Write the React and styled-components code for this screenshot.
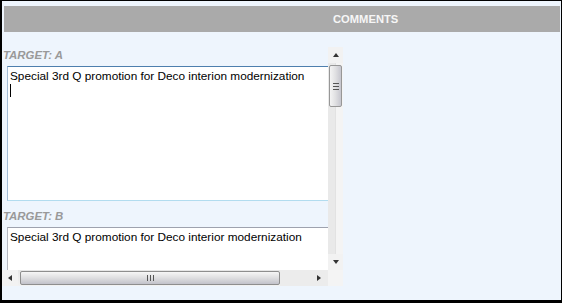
import styled, { createGlobalStyle } from "styled-components";

const GlobalStyle = createGlobalStyle`
  body {
    margin: 0;
    font-family: "Liberation Sans", Arial, sans-serif;
  }
`;

const comments = [
  {
    target: "A",
    text: "Special 3rd Q promotion for Deco interion modernization",
    height: 135,
    focused: true,
  },
  {
    target: "B",
    text: "Special 3rd Q promotion for Deco interior modernization",
    height: 135,
    focused: false,
  },
];

const App = () => {
  return (
    <>
      <GlobalStyle />
      <Frame>
        <HeaderBar>COMMENTS</HeaderBar>
        <Panel>
          <Viewport>
            {comments.map((c) => (
              <Field key={c.target}>
                <Label>TARGET: {c.target}</Label>
                <TextBox $height={c.height} $focused={c.focused}>
                  {c.text}
                  {c.focused && <Caret />}
                </TextBox>
              </Field>
            ))}
          </Viewport>
          <VScroll>
            <VButton>
              <ArrowUp />
            </VButton>
            <VThumb>
              <HGrip />
            </VThumb>
            <Spacer />
            <VButton>
              <ArrowDown />
            </VButton>
          </VScroll>
          <HScroll>
            <HButton>
              <ArrowLeft />
            </HButton>
            <HThumb>
              <VGrip />
            </HThumb>
            <HRest>
              <ArrowRight />
            </HRest>
          </HScroll>
          <Corner />
        </Panel>
      </Frame>
    </>
  );
};

export default App;

const Frame = styled.div`
  box-sizing: border-box;
  width: 562px;
  height: 303px;
  border-style: solid;
  border-color: #000;
  border-width: 1px 1px 3px 2px;
  background: #eef5fd;
  padding-top: 5px;
`;

const HeaderBar = styled.div`
  height: 26px;
  margin: 0 1px 0 2px;
  background: #aaaaaa;
  display: flex;
  align-items: center;
  padding-left: 329px;
  color: #f6f6f6;
  font-weight: bold;
  font-size: 11.2px;
`;

const Panel = styled.div`
  margin-top: 15px;
  display: grid;
  grid-template-columns: 326px 15px;
  grid-template-rows: 223px 16px;
  width: 341px;
`;

const Viewport = styled.div`
  overflow: hidden;
  padding-left: 1px;
`;

const Field = styled.div`
  & + & {
    margin-top: 7px;
  }
`;

const Label = styled.div`
  height: 19px;
  box-sizing: border-box;
  padding-top: 2px;
  line-height: 13px;
  font-size: 11.4px;
  font-weight: bold;
  font-style: italic;
  color: #999999;
`;

const TextBox = styled.div`
  box-sizing: border-box;
  width: 380px;
  height: ${(p) => p.$height}px;
  margin-left: 4px;
  padding: 2px 2px 1px;
  background: #fff;
  border: 1px solid;
  border-color: ${(p) =>
    p.$focused
      ? "#4e7fae #a3bcd6 #b2dcef #a3bcd6"
      : "#9ea2ae #b4b8c2 #b4b8c2 #b4b8c2"};
  font-size: 11.8px;
  line-height: 14px;
  color: #000;
  white-space: nowrap;
`;

const Caret = styled.div`
  width: 1px;
  height: 13px;
  margin-top: 1px;
  background: #000;
`;

const VScroll = styled.div`
  display: flex;
  flex-direction: column;
  background: linear-gradient(to right, #e9e9e9 0 7px, #e2e2e2 7px 8px, #f4f4f4 8px);
`;

const VButton = styled.div`
  height: 16px;
  display: flex;
  align-items: center;
  justify-content: center;
  background: #f2f2f2;
`;

const Spacer = styled.div`
  flex: 1;
`;

const VThumb = styled.div`
  box-sizing: border-box;
  height: 42px;
  margin: 2px 1px 0;
  border: 1px solid #979797;
  border-radius: 2px;
  background: linear-gradient(to right, #f4f4f4, #e0e0e2 50%, #c6c6ce);
  display: flex;
  align-items: center;
  justify-content: center;
`;

const HGrip = styled.div`
  width: 6px;
  height: 7px;
  background: repeating-linear-gradient(to bottom, #555 0 1px, transparent 1px 3px);
`;

const HScroll = styled.div`
  display: flex;
  background: linear-gradient(to bottom, #e6e6e6, #f2f2f2);
`;

const HButton = styled.div`
  width: 16px;
  display: flex;
  align-items: center;
  justify-content: center;
  background: #f2f2f2;
  margin-right: 2px;
`;

const HThumb = styled.div`
  box-sizing: border-box;
  width: 260px;
  height: 14px;
  margin-top: 1px;
  border: 1px solid #8e8e8e;
  border-radius: 2px;
  background: linear-gradient(to bottom, #f6f6f6, #dedee0 50%, #c2c2ca);
  display: flex;
  align-items: center;
  justify-content: center;
`;

const VGrip = styled.div`
  width: 7px;
  height: 6px;
  background: repeating-linear-gradient(to right, #555 0 1px, transparent 1px 3px);
`;

const HRest = styled.div`
  flex: 1;
  display: flex;
  align-items: center;
  justify-content: flex-end;
  padding-right: 7px;
  background: #ececec;
`;

const Corner = styled.div`
  background: #f4f4f4;
`;

const ArrowUp = styled.div`
  width: 0;
  height: 0;
  border-left: 3px solid transparent;
  border-right: 3px solid transparent;
  border-bottom: 4px solid #333;
  margin-left: 1px;
`;

const ArrowDown = styled(ArrowUp)`
  border-bottom: 0;
  border-top: 4px solid #333;
`;

const ArrowLeft = styled.div`
  width: 0;
  height: 0;
  border-top: 3px solid transparent;
  border-bottom: 3px solid transparent;
  border-right: 4px solid #333;
`;

const ArrowRight = styled(ArrowLeft)`
  border-right: 0;
  border-left: 4px solid #333;
`;
